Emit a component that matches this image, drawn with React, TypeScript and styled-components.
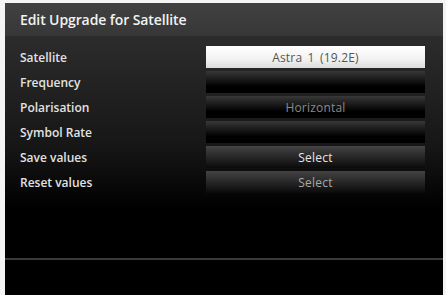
import React from "react";
import styled, { createGlobalStyle } from "styled-components";

const Global = createGlobalStyle`
  html, body { margin: 0; padding: 0; background: #fff; }
  body { width: 446px; height: 295px; overflow: hidden; font-family: "Open Sans", "Liberation Sans", sans-serif; }
`;

const Page = styled.div`
  width: 446px;
  height: 295px;
  padding: 3px 3px 0 5px;
  box-sizing: border-box;
  background: #f4f4f4;
`;

const Screen = styled.div`
  height: 100%;
  display: flex;
  flex-direction: column;
  background: #000;
`;

const TitleBar = styled.div`
  height: 33px;
  flex: none;
  display: flex;
  align-items: center;
  padding-left: 15px;
  background: linear-gradient(#414141, #373737);
  color: #f2f2f2;
  font-size: 14px;
  font-weight: 600;
  letter-spacing: -0.1px;
`;

const Body = styled.div`
  height: 222px;
  flex: none;
  background: linear-gradient(#2c2c2c 0%, #161616 50%, #000 78%);
  display: flex;
  flex-direction: column;
  gap: 3px;
  padding: 10px 16px 0 15px;
  box-sizing: border-box;
`;

const Row = styled.div`
  display: grid;
  grid-template-columns: 186px 219px;
  height: 22px;
  align-items: center;
`;

const Label = styled.div`
  color: #e2e2e2;
  font-size: 12px;
  font-weight: 600;
  letter-spacing: 0;
`;

const Field = styled.div<{ $variant: "light" | "dark" | "mid" }>`
  height: 22px;
  display: flex;
  align-items: center;
  justify-content: center;
  font-size: 12px;
  letter-spacing: 0.2px;
  word-spacing: 2px;
  background: ${(p) =>
    p.$variant === "light"
      ? "linear-gradient(#ffffff 0%, #f2f2f2 60%, #dcdcdc 100%)"
      : p.$variant === "mid"
      ? "linear-gradient(#444 0%, #2a2a2a 45%, #0a0a0a 100%)"
      : "linear-gradient(#383838 0%, #1c1c1c 35%, #000 70%, #000 100%)"};
`;

const Value = styled.span<{ $color: string; $bold?: boolean }>`
  color: ${(p) => p.$color};
  font-weight: ${(p) => (p.$bold ? 600 : 400)};
`;

const Footer = styled.div`
  flex: 1;
  border-top: 2px solid #3a3a3a;
  background: #000;
`;

const rows: { label: string; value: string; variant: "light" | "dark" | "mid"; color: string; bold?: boolean }[] = [
  { label: "Satellite", value: "Astra 1 (19.2E)", variant: "light", color: "#555" },
  { label: "Frequency", value: "", variant: "dark", color: "#999" },
  { label: "Polarisation", value: "Horizontal", variant: "dark", color: "#8a8a8a" },
  { label: "Symbol Rate", value: "", variant: "dark", color: "#999" },
  { label: "Save values", value: "Select", variant: "mid", color: "#e6e6e6" },
  { label: "Reset values", value: "Select", variant: "mid", color: "#a8a8a8" },
];

export default function App() {
  return (
    <>
      <Global />
      <Page>
        <Screen>
          <TitleBar>Edit Upgrade for Satellite</TitleBar>
          <Body>
            {rows.map((r) => (
              <Row key={r.label}>
                <Label>{r.label}</Label>
                <Field $variant={r.variant}>
                  <Value $color={r.color} $bold={r.bold}>{r.value}</Value>
                </Field>
              </Row>
            ))}
          </Body>
          <Footer />
        </Screen>
      </Page>
    </>
  );
}
